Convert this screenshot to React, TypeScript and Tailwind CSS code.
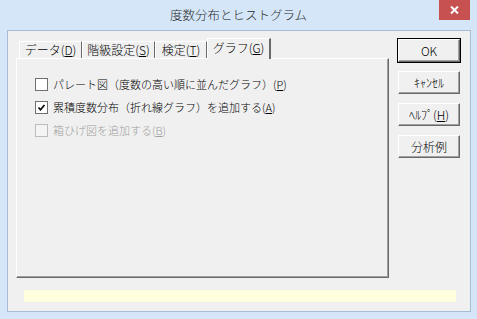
import React from 'react';

const font = { fontFamily: '"Noto Sans CJK JP", "Noto Sans", sans-serif' };

function Mn({ label, k }: { label: string; k: string }) {
  return (
    <span>
      {label}(<u>{k}</u>)
    </span>
  );
}

function Check({ checked, disabled, children }: { checked?: boolean; disabled?: boolean; children: React.ReactNode }) {
  return (
    <div className={`flex items-center h-[13px] gap-[5px] ${disabled ? 'text-[#a0a0a0]' : 'text-black'}`}>
      <div
        className={`w-[13px] h-[13px] border flex items-center justify-center ${
          disabled ? 'border-[#bcbcbc] bg-[#f4f4f4]' : 'border-[#707070] bg-white'
        }`}
      >
        {checked && (
          <svg width="9" height="9" viewBox="0 0 9 9">
            <path d="M1.5 4.5 L3.5 6.8 L7.5 2" fill="none" stroke="#000" strokeWidth="1.6" />
          </svg>
        )}
      </div>
      <span className="text-[11px] leading-none whitespace-nowrap font-light">{children}</span>
    </div>
  );
}

function Btn({ children, isDefault }: { children: React.ReactNode; isDefault?: boolean }) {
  const inner = (
    <div className="h-[23px] w-full bg-[#f0f0f0] border border-t-white border-l-white border-r-[#696969] border-b-[#696969] shadow-[inset_-1px_-1px_0_#a0a0a0] flex items-center justify-center text-[12px] font-light text-black leading-none">
      {children}
    </div>
  );
  if (isDefault) {
    return <div className="w-[64px] border border-black">{inner}</div>;
  }
  return <div className="w-[64px] px-px">{inner}</div>;
}

export default function App() {
  const tabs = [
    { label: 'データ', k: 'D', w: 'w-[63px]' },
    { label: '階級設定', k: 'S', w: 'w-[73px]' },
    { label: '検定', k: 'T', w: 'w-[52px]' },
  ];

  return (
    <div className="w-[477px] h-[319px] bg-[#d4e6f8] flex flex-col" style={font}>
      {/* title bar */}
      <div className="h-[30px] relative flex items-center justify-center">
        <span className="text-[12.5px] font-light text-[#2b2b2b] pt-[1px]">度数分布とヒストグラム</span>
        <div className="absolute right-[7px] top-0 w-[31px] h-[20px] bg-[#c75050] flex items-center justify-center">
          <svg width="9" height="8" viewBox="0 0 9 8">
            <path d="M1 0.5 L8 7.5 M8 0.5 L1 7.5" stroke="#fff" strokeWidth="2" />
          </svg>
        </div>
      </div>

      {/* client */}
      <div className="ml-[7px] mr-[6px] h-[282px] border border-[#a6bdd5] bg-[#f0f0f0] flex flex-col">
        <div className="flex pt-[7px] pl-[8px]">
          {/* tabs + panel */}
          <div className="flex flex-col w-[373px]">
            <div className="flex items-end pl-[3px] h-[20px]">
              {tabs.map((t) => (
                <div
                  key={t.k}
                  className={`${t.w} h-[17px] border-t border-l border-t-white border-l-white border-r border-r-[#696969] flex items-center justify-center text-[12px] font-light leading-none text-black`}
                >
                  <Mn label={t.label} k={t.k} />
                </div>
              ))}
              <div className="relative z-10 w-[64px] h-[21px] -mb-px bg-[#f0f0f0] border-t border-l border-t-white border-l-white border-r-2 border-r-[#696969] flex items-center justify-center text-[12px] font-light leading-none text-black pb-[2px]">
                <Mn label="グラフ" k="G" />
              </div>
            </div>
            <div className="h-[220px] border border-t-white border-l-white border-r-[#696969] border-b-[#696969] shadow-[inset_-1px_-1px_0_#a0a0a0] flex flex-col gap-[10px] pt-[19px] pl-[18px]">
              <Check>
                パレート図（度数の高い順に並んだグラフ）(<u>P</u>)
              </Check>
              <Check checked>
                累積度数分布（折れ線グラフ）を追加する(<u>A</u>)
              </Check>
              <Check disabled>
                箱ひげ図を追加する(<u>B</u>)
              </Check>
            </div>
          </div>

          {/* buttons */}
          <div className="flex flex-col ml-[8px]">
            <Btn isDefault>OK</Btn>
            <div className="mt-[8px] flex flex-col gap-[9px]">
              <Btn>ｷｬﾝｾﾙ</Btn>
              <Btn>
                ﾍﾙﾌﾟ(<u>H</u>)
              </Btn>
              <Btn>分析例</Btn>
            </div>
          </div>
        </div>

        <div className="mt-[12px] ml-[16px] w-[432px] h-[12px] bg-[#ffffe0]" />
      </div>
    </div>
  );
}
